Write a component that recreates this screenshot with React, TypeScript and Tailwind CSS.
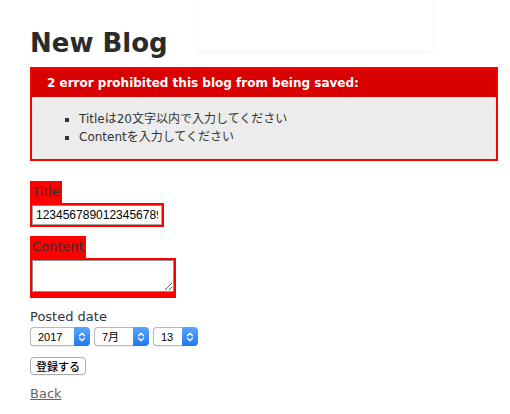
import React from "react";

function Chevrons() {
  return (
    <svg width="8" height="12" viewBox="0 0 8 12" fill="none">
      <path
        d="M1.5 4.8 L4 2.3 L6.5 4.8"
        stroke="white"
        strokeWidth="1.3"
        strokeLinecap="round"
        strokeLinejoin="round"
      />
      <path
        d="M1.5 7.2 L4 9.7 L6.5 7.2"
        stroke="white"
        strokeWidth="1.3"
        strokeLinecap="round"
        strokeLinejoin="round"
      />
    </svg>
  );
}

function FakeSelect({ value, width }: { value: string; width: string }) {
  return (
    <div className={`flex h-[19px] ${width}`}>
      <div className="flex flex-1 items-center rounded-l-[4px] border border-r-0 border-[#b8b8b8] bg-white pl-[7px] font-['Liberation_Sans','Noto_Sans_CJK_JP',sans-serif] text-[11px] text-black shadow-[0_1px_1px_rgba(0,0,0,0.08)]">
        {value}
      </div>
      <div className="flex w-[16px] items-center justify-center rounded-r-[4px] bg-gradient-to-b from-[#5aa6fa] to-[#1c78f2]">
        <Chevrons />
      </div>
    </div>
  );
}

export default function App() {
  return (
    <div className="relative h-[414px] w-[510px] overflow-hidden bg-white pl-[30px] font-['DejaVu_Sans','Noto_Sans_CJK_JP',sans-serif] text-[13px] leading-[18px] text-[#333]">
      <div className="absolute left-[196px] top-0 h-[50px] w-[236px] bg-white shadow-[0_2px_8px_rgba(0,0,0,0.04)]" />

      <h1 className="pt-[27px] text-[26px] font-bold leading-[32px] text-[#2b2b2b]">
        New Blog
      </h1>

      <div className="mt-[8px] w-[468px] border-2 border-[#ff0000] bg-[#ececec]">
        <h2 className="bg-[#d80000] py-[5px] pl-[15px] text-[12px] font-bold leading-[18px] text-white">
          2 error prohibited this blog from being saved:
        </h2>
        <ul className="my-[13px] list-[square] pl-[47px] text-[12px] leading-[18px]">
          <li>Titleは20文字以内で入力してください</li>
          <li>Contentを入力してください</li>
        </ul>
      </div>

      <div className="mt-[20px]">
        <div className="w-fit bg-[#ff0000] p-[2px]">
          <label>Title</label>
        </div>
        <div className="w-fit bg-[#ff0000] p-[2px]">
          <input
            readOnly
            defaultValue="123456789012345678901"
            className="block h-[20px] w-[130px] border border-[#a5a5a5] border-t-[#8c8c8c] bg-white px-[3px] font-['Liberation_Sans',sans-serif] text-[12px] text-black outline-none"
          />
        </div>
      </div>

      <div className="mt-[9px]">
        <div className="w-fit bg-[#ff0000] p-[2px]">
          <label>Content</label>
        </div>
        <div className="w-fit bg-[#ff0000] px-[2px] pb-[6px] pt-[2px]">
          <textarea
            readOnly
            className="block h-[32px] w-[142px] border border-[#8f8f8f] bg-white outline-none"
          />
        </div>
      </div>

      <div className="mt-[10px]">
        <label>Posted date</label>
        <div className="mt-[1px] flex gap-[4px]">
          <FakeSelect value="2017" width="w-[60px]" />
          <FakeSelect value="7月" width="w-[55px]" />
          <FakeSelect value="13" width="w-[45px]" />
        </div>
      </div>

      <div className="mt-[11px]">
        <button className="flex h-[18px] w-[56px] items-center justify-center rounded-[4px] border border-[#ababab] bg-white font-['Noto_Sans_CJK_JP',sans-serif] text-[11px] font-medium leading-none text-black shadow-[0_1px_1px_rgba(0,0,0,0.06)]">
          登録する
        </button>
      </div>

      <div className="mt-[10px]">
        <a href="#" className="text-[#666] underline">
          Back
        </a>
      </div>
    </div>
  );
}
